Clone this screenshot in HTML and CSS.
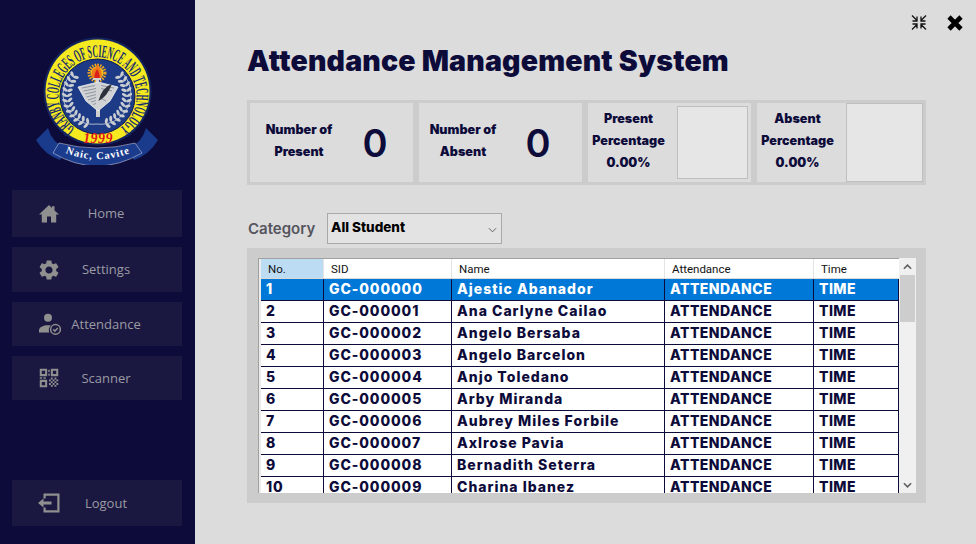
FILE: index.html
```html
<!DOCTYPE html>
<html lang="en">
<head>
<meta charset="utf-8">
<title>Attendance Management System</title>
<link rel="stylesheet" href="styles.css">
</head>
<body>
<div class="app">
  <aside class="sidebar">
    <svg class="logo" viewBox="30 30 135 135" aria-label="Granby Colleges of Science and Technology seal">
      <defs>
        <path id="ringText" d="M75 128 A39 39 0 1 1 120 128"/>
        <path id="bannerText" d="M60 150.5 Q97 168 136 150.5"/>
        <g id="leafPair">
          <ellipse cx="97" cy="62.500" rx="1.500" ry="3" transform="rotate(30 97 62.500)"/>
          <ellipse cx="97" cy="67.500" rx="1.500" ry="3" transform="rotate(-30 97 67.500)"/>
        </g>
        <g id="branch">
          <path class="wreath-line" d="M73 72 A30 30 0 0 0 97 124"/>
          <use href="#leafPair" transform="rotate(-50 97 95)"/>
          <use href="#leafPair" transform="rotate(-60 97 95)"/>
          <use href="#leafPair" transform="rotate(-70 97 95)"/>
          <use href="#leafPair" transform="rotate(-80 97 95)"/>
          <use href="#leafPair" transform="rotate(-90 97 95)"/>
          <use href="#leafPair" transform="rotate(-100 97 95)"/>
          <use href="#leafPair" transform="rotate(-110 97 95)"/>
          <use href="#leafPair" transform="rotate(-120 97 95)"/>
          <use href="#leafPair" transform="rotate(-130 97 95)"/>
          <use href="#leafPair" transform="rotate(-140 97 95)"/>
          <use href="#leafPair" transform="rotate(-150 97 95)"/>
          <use href="#leafPair" transform="rotate(-160 97 95)"/>
        </g>
      </defs>
      <path class="rib-back" d="M36 140 L48 128 Q52 143 67 149 L60 160 Q45 155 36 140 Z"/>
      <path class="rib-back" d="M158 140 L146 128 Q142 143 127 149 L134 160 Q149 155 158 140 Z"/>
      <circle class="seal-edge" cx="97.500" cy="91.500" r="54"/>
      <circle class="seal-yellow" cx="97.500" cy="91.500" r="52"/>
      <circle class="seal-inner" cx="97.500" cy="96.500" r="37.500"/>
      <text class="ring-text"><textPath href="#ringText" textLength="197" lengthAdjust="spacingAndGlyphs">GRANBY COLLEGES OF SCIENCE AND TECHNOLOGY</textPath></text>
      <circle class="sun-rays" cx="97" cy="73" r="8"/>
      <circle class="sun" cx="97" cy="73" r="6.500"/>
      <path class="flame-outer" d="M97 64 Q103 70 101.500 78 L92.500 78 Q90 72 94 68 Q95 70 97 64 Z"/>
      <path class="flame" d="M97 69 Q100 73 99.500 78 L94.500 78 Q94 74 97 69 Z"/>
      <rect class="stem" x="93" y="78" width="8" height="2"/>
      <rect class="stem" x="96" y="80" width="3" height="5"/>
      <rect class="stem" x="96" y="108" width="4" height="9"/>
      <path class="book" d="M78 87 L98 82 L118 87 L110 101 L98 111 L86 101 Z"/>
      <path class="book-lines" d="M82 88 L95 85.500 M83.500 91 L96 88.500 M85 94 L96 91.500 M86.500 97 L96 94.500 M88 100 L96 97.500 M91 102 L96 100.500 M93 104.500 L96 103.500 M101 85.500 L114 88 M101 88.500 L112 91 M100 98 L106 101"/>
      <path class="quill" d="M112 84 Q102 87 98.500 101 Q107 97 112 84 Z"/>
      <g class="wreath">
        <use href="#branch"/>
        <use href="#branch" transform="translate(194 0) scale(-1 1)"/>
      </g>
      <text class="year" x="98" y="143" text-anchor="middle">1999</text>
      <path class="rib-front" d="M59 143 Q97 153 135 143 L142 153 Q97 179 53 153 Z"/>
      <text class="banner-text"><textPath href="#bannerText" startOffset="50%" text-anchor="middle">Naic, Cavite</textPath></text>
    </svg>

    <nav class="nav">
      <a class="nav-item nav-home">
        <svg class="nav-icon" viewBox="0 0 24 24"><path d="M10 20.500v-6h4v6h5.200v-8H22L17.500 8.400V4.200h-2.600v1.700L12 3 2 12.500h2.800v8z"/></svg>
        <span class="nav-label">Home</span>
      </a>
      <a class="nav-item nav-settings">
        <svg class="nav-icon" viewBox="0 0 24 24"><path d="M19.14 12.94c.04-.3.06-.61.06-.94 0-.32-.02-.64-.07-.94l2.03-1.58a.49.49 0 0 0 .12-.61l-1.92-3.32a.488.488 0 0 0-.59-.22l-2.39.96c-.5-.38-1.03-.7-1.62-.94l-.36-2.54a.484.484 0 0 0-.48-.41h-3.84c-.24 0-.43.17-.47.41l-.36 2.54c-.59.24-1.13.57-1.62.94l-2.39-.96c-.22-.08-.47 0-.59.22L2.74 8.87c-.12.21-.08.47.12.61l2.03 1.58c-.05.3-.09.63-.09.94s.02.64.07.94l-2.03 1.58a.49.49 0 0 0-.12.61l1.92 3.32c.12.22.37.29.59.22l2.39-.96c.5.38 1.03.7 1.62.94l.36 2.54c.05.24.24.41.48.41h3.84c.24 0 .44-.17.47-.41l.36-2.54c.59-.24 1.13-.56 1.62-.94l2.39.96c.22.08.47 0 .59-.22l1.92-3.32c.12-.22.07-.47-.12-.61l-2.01-1.58zM12 15.6c-1.98 0-3.6-1.62-3.6-3.6s1.62-3.6 3.6-3.6 3.6 1.62 3.6 3.6-1.62 3.6-3.6 3.6z"/></svg>
        <span class="nav-label">Settings</span>
      </a>
      <a class="nav-item nav-attendance">
        <svg class="nav-icon" viewBox="0 0 24 24"><circle cx="11" cy="5.800" r="4"/><path d="M2 20.500v-2.200c0-3 4.500-5 9-5 1 0 1.900.1 2.800.3a7 7 0 0 0-1.600 6.900z"/><path fill-rule="evenodd" d="M18.500 11.800a5.600 5.600 0 1 0 0 11.200 5.600 5.600 0 0 0 0-11.200zm0 1.500a4.100 4.100 0 1 1 0 8.200 4.100 4.100 0 0 1 0-8.200z"/><path class="nav-check" d="M16.200 17.400l1.700 1.700 2.900-3"/></svg>
        <span class="nav-label">Attendance</span>
      </a>
      <a class="nav-item nav-scanner">
        <svg class="nav-icon" viewBox="0 0 26 26"><path fill-rule="evenodd" d="M3 3h8v8H3zm2.200 2.200v3.600h3.600V5.200zM15 3h8v8h-8zm2.200 2.200v3.600h3.600V5.200zM3 15h8v8H3zm2.200 2.200v3.600h3.600v-3.600z"/><path d="M12.300 4h1.500v2.500h-1.500zM12.300 8h1.500v2.500h-1.500zM3 12.300h2.500v1.500H3zM7 12.300h2.500v1.500H7zM15 12.500h2v2h-2zM19 12.500h2v2h-2zM13 14.500h2v2h-2zM17 14.500h2v2h-2zM21 14.500h2v2h-2zM15 16.500h2v2h-2zM19 16.500h2v2h-2zM13 18.500h2v2h-2zM17 18.500h2v2h-2zM21 18.500h2v2h-2zM15 20.500h2v2h-2zM19 20.500h2v2h-2z"/></svg>
        <span class="nav-label">Scanner</span>
      </a>
      <a class="nav-item nav-logout">
        <svg class="nav-icon" viewBox="0 0 24 24"><path d="M6.500 2.500h16v19h-16v-5h2.200v2.800h11.600V4.700H8.700v2.800H6.500z"/><path d="M1 12l5.500-4.500V10.500h8v3h-8v3z"/></svg>
        <span class="nav-label">Logout</span>
      </a>
    </nav>
  </aside>

  <main class="main">
    <div class="window-bar">
      <svg class="win-shrink" viewBox="0 0 16 16"><path d="M1 1l5 5M6 2v4.500H1.500M15 1l-5 5M10 2v4.500h4.500M1 15l5-5M6 14V9.500H1.500M15 15l-5-5M10 14V9.500h4.500"/></svg>
      <svg class="win-close" viewBox="0 0 18 18"><path d="M3 3l12 12M15 3L3 15"/></svg>
    </div>

    <h1 class="title">Attendance Management System</h1>

    <section class="stats">
      <div class="card count-present">
        <div class="stat-label"><span>Number of</span><span>Present</span></div>
        <div class="stat-value">0</div>
      </div>
      <div class="card count-absent">
        <div class="stat-label"><span>Number of</span><span>Absent</span></div>
        <div class="stat-value">0</div>
      </div>
      <div class="card pct-present">
        <div class="stat-label"><span>Present</span><span>Percentage</span><span>0.00%</span></div>
        <div class="chart-box"></div>
      </div>
      <div class="card pct-absent">
        <div class="stat-label"><span>Absent</span><span>Percentage</span><span>0.00%</span></div>
        <div class="chart-box"></div>
      </div>
    </section>

    <div class="filter">
      <span class="filter-label">Category</span>
      <div class="select"><span>All Student</span>
        <svg class="chevron" viewBox="0 0 10 6"><path d="M1 1l4 4 4-4"/></svg>
      </div>
    </div>

    <section class="panel">
      <div class="grid">
        <div class="grid-view">
          <table>
            <thead>
              <tr><th class="col-no current">No.</th><th class="col-sid">SID</th><th class="col-name">Name</th><th class="col-att">Attendance</th><th class="col-time">Time</th></tr>
            </thead>
            <tbody>
              <tr class="selected"><td>1</td><td>GC-000000</td><td>Ajestic Abanador</td><td>ATTENDANCE</td><td>TIME</td></tr>
              <tr><td>2</td><td>GC-000001</td><td>Ana Carlyne Cailao</td><td>ATTENDANCE</td><td>TIME</td></tr>
              <tr><td>3</td><td>GC-000002</td><td>Angelo Bersaba</td><td>ATTENDANCE</td><td>TIME</td></tr>
              <tr><td>4</td><td>GC-000003</td><td>Angelo Barcelon</td><td>ATTENDANCE</td><td>TIME</td></tr>
              <tr><td>5</td><td>GC-000004</td><td>Anjo Toledano</td><td>ATTENDANCE</td><td>TIME</td></tr>
              <tr><td>6</td><td>GC-000005</td><td>Arby Miranda</td><td>ATTENDANCE</td><td>TIME</td></tr>
              <tr><td>7</td><td>GC-000006</td><td>Aubrey Miles Forbile</td><td>ATTENDANCE</td><td>TIME</td></tr>
              <tr><td>8</td><td>GC-000007</td><td>Axlrose Pavia</td><td>ATTENDANCE</td><td>TIME</td></tr>
              <tr><td>9</td><td>GC-000008</td><td>Bernadith Seterra</td><td>ATTENDANCE</td><td>TIME</td></tr>
              <tr><td>10</td><td>GC-000009</td><td>Charina Ibanez</td><td>ATTENDANCE</td><td>TIME</td></tr>
            </tbody>
          </table>
        </div>
        <div class="scrollbar">
          <svg class="scroll-arrow" viewBox="0 0 10 6"><path d="M1 5l4-4 4 4"/></svg>
          <div class="scroll-track"><div class="scroll-thumb"></div></div>
          <svg class="scroll-arrow" viewBox="0 0 10 6"><path d="M1 1l4 4 4-4"/></svg>
        </div>
      </div>
    </section>
  </main>
</div>
</body>
</html>
```
FILE: styles.css
```css
* { box-sizing: border-box; }
html, body { margin: 0; height: 100%; }
body { background: #dcdcdc; font-family: "Inter", "Liberation Sans", sans-serif; color: #0d0b3a; overflow: hidden; }

.app { display: flex; width: 976px; height: 544px; }

/* Sidebar */
.sidebar { width: 195px; flex: none; background: #0d0b3a; padding: 30px 13px 18px 12px; display: flex; flex-direction: column; }
.logo { width: 135px; height: 135px; margin: 0 0 25px 18px; flex: none; display: block; }
.rib-back { fill: #1a3a8c; }
.rib-front { fill: #1b3b8d; stroke: #dfe3f0; stroke-width: .5; }
.seal-edge { fill: #14245f; }
.seal-yellow { fill: #f5e91f; }
.seal-inner { fill: #1c3a85; stroke: #0e1a52; stroke-width: 1; }
.ring-text { font-family: "Liberation Serif", serif; font-weight: 700; font-size: 18px; fill: #142a70; }
.sun { fill: #f6c21c; }
.sun-rays { fill: none; stroke: #f1a820; stroke-width: 3; stroke-dasharray: 1.500 1.200; }
.flame-outer { fill: #f07a1a; }
.flame { fill: #d9201a; }
.book { fill: #d0d2d4; stroke: #f2f2f2; stroke-width: .8; }
.book-lines { stroke: #727b88; stroke-width: .7; fill: none; }
.quill { fill: #2c323c; }
.stem { fill: #cfcfcf; }
.wreath { fill: #c9ccd0; }
.wreath-line { fill: none; stroke: #eeeeee; stroke-width: .7; }
.year { font-family: "Liberation Serif", serif; font-style: italic; font-weight: 700; font-size: 14px; letter-spacing: .4px; fill: #e3161d; }
.banner-text { font-family: "Liberation Serif", serif; font-weight: 700; font-size: 10.5px; letter-spacing: 1px; fill: #fff; }

.nav { flex: 1; display: flex; flex-direction: column; gap: 10px; }
.nav-item { display: flex; align-items: center; padding-left: 25px; background: #1a1840; color: #9b9ba3; font-family: "Open Sans", sans-serif; font-size: 13px; font-weight: 500; }
.nav-home { height: 47px; }
.nav-settings { height: 45px; }
.nav-attendance { height: 44px; }
.nav-scanner { height: 44px; }
.nav-logout { height: 46px; margin-top: auto; }
.nav-home .nav-label, .nav-settings .nav-label { padding-bottom: 2px; }
.nav-icon { width: 24px; height: 24px; fill: #8f8f8f; flex: none; }
.nav-check { fill: none; stroke: #8f8f8f; stroke-width: 1.5; }
.nav-label { width: 80px; margin-left: 5px; text-align: center; flex: none; }

/* Main */
.main { flex: 1; min-width: 0; padding: 0 50px 0 52px; display: flex; flex-direction: column; }
.window-bar { height: 40px; padding: 14px 0 0; margin-right: -38px; display: flex; justify-content: flex-end; gap: 19px; flex: none; }
.win-shrink { width: 16px; height: 17px; fill: none; stroke: #111; stroke-width: 1.3; }
.win-close { width: 18px; height: 18px; fill: none; stroke: #000; stroke-width: 4.600; }
.title { margin: 0 0 20px; height: 40px; font-size: 28.5px; line-height: 42px; font-weight: 900; letter-spacing: .17px; color: #0d0b3a; white-space: nowrap; flex: none; }

.stats { height: 85px; padding: 3px; background: #cccccc; display: grid; grid-template-columns: 163px 163px 163px 166px; gap: 6px; flex: none; }
.card { background: #dcdcdc; display: grid; align-items: center; }
.count-present { grid-template-columns: 98px 54px; }
.count-absent { grid-template-columns: 88px 62px; }
.pct-present { grid-template-columns: 81px 71px; column-gap: 8px; }
.pct-absent { grid-template-columns: 81px 77px; column-gap: 8px; }
.stat-label { display: flex; flex-direction: column; align-items: center; padding-bottom: 4px; font-size: 12.6px; line-height: 22px; font-weight: 900; white-space: nowrap; }
.stat-value { text-align: center; font-size: 38px; line-height: 44px; font-weight: 600; }
.chart-box { background: #e6e6e6; border: 1px solid #bfbfbf; height: 73px; }
.pct-absent .chart-box { height: 79px; }

.filter { margin-top: 28px; height: 31px; display: flex; align-items: center; flex: none; padding-left: 1px; }
.filter-label { width: 79px; font-size: 15px; font-weight: 600; color: #55555f; }
.select { position: relative; width: 175px; height: 31px; padding: 0 3px; background: #e3e3e3; border: 1px solid #a9a9a9; display: flex; align-items: center; font-size: 13.5px; font-weight: 800; color: #000; }
.select span { position: relative; top: -2px; }
.chevron { position: absolute; right: 4px; top: 13px; width: 9px; height: 6px; fill: none; stroke: #555; stroke-width: 1; }

.panel { margin-top: 4px; height: 255px; padding: 10px 10px 10px 11px; background: #cccccc; flex: none; }
.grid { display: flex; height: 235px; }
.grid-view { width: 641px; height: 235px; overflow: hidden; background: #ececec; border-top: 1px solid #a0a0a0; border-left: 1px solid #a0a0a0; padding-left: 2px; }
table { border-collapse: separate; border-spacing: 0; table-layout: fixed; width: 638px; }
.col-no { width: 63px; }
.col-sid { width: 128px; }
.col-name { width: 213px; }
.col-att { width: 149px; }
.col-time { width: 85px; }
th { height: 20px; padding: 0 0 0 7px; text-align: left; font-family: "Roboto", "Liberation Sans", sans-serif; font-size: 11.5px; font-weight: 400; color: #111; background: #fff; border-right: 1px solid #e4e4e4; border-bottom: 1px solid #d8d8d8; }
th.current { background: #bcdcf4; }
th:last-child { border-right: 0; }
td { height: 22px; padding: 0 0 2px 5px; font-size: 14px; font-weight: 800; letter-spacing: .9px; line-height: 19px; color: #0d0b3a; background: #fff; border-right: 1px solid #0d0b3a; border-bottom: 1px solid #0d0b3a; white-space: nowrap; overflow: hidden; }
td:nth-child(3) { letter-spacing: 1px; }
td:nth-child(4), td:nth-child(5) { letter-spacing: .45px; }
.selected td { background: #0078d7; color: #fff; }
.scrollbar { width: 17px; height: 235px; background: #f0f0f0; display: flex; flex-direction: column; align-items: center; }
.scroll-arrow { width: 9px; height: 6px; margin: 6px 0 5px; flex: none; fill: none; stroke: #606060; stroke-width: 1.8; }
.scroll-track { flex: 1; width: 100%; padding-left: 1px; padding-right: 1px; }
.scroll-thumb { height: 47px; background: #cdcdcd; }
```
